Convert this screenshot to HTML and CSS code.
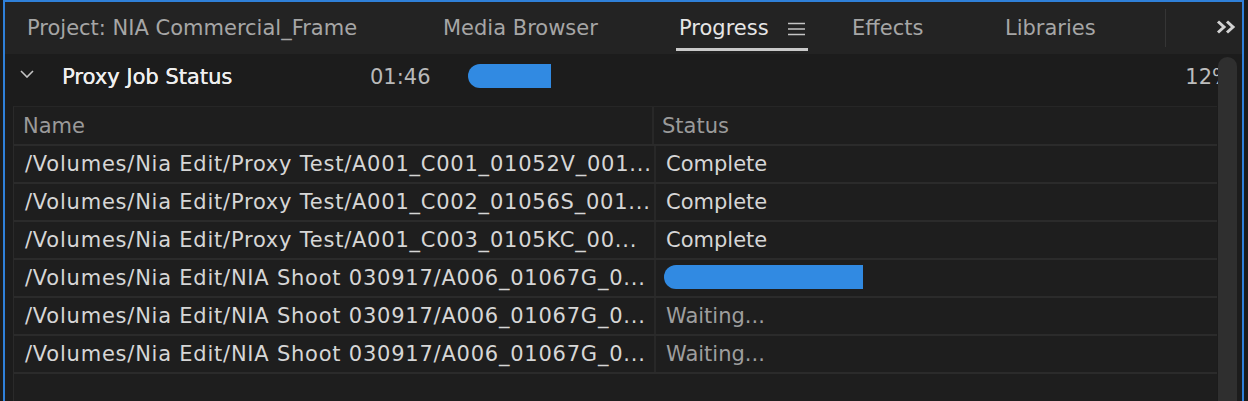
FILE: index.html
```html
<!DOCTYPE html>
<html>
<head>
<meta charset="utf-8">
<link rel="stylesheet" href="styles.css">
</head>
<body>
<div class="frame">
  <div class="tabbar">
    <div class="tab tab-project">Project: NIA Commercial_Frame</div>
    <div class="tab tab-media">Media Browser</div>
    <div class="tab tab-progress">
      <span class="active-tab">Progress
        <svg class="menu-icon" width="17" height="14" viewBox="0 0 17 14"><path d="M0 1.5H17M0 7H17M0 12.5H17" stroke="#c4c4c4" stroke-width="1.6" fill="none"/></svg>
      </span>
    </div>
    <div class="tab tab-effects">Effects</div>
    <div class="tab tab-libraries">Libraries</div>
    <div class="tab-sep"></div>
    <svg class="more-icon" width="20" height="14" viewBox="0 0 20 14"><path d="M2 1.5L8 7L2 12.5M11 1.5L17 7L11 12.5" stroke="#d2d2d2" stroke-width="3" fill="none"/></svg>
  </div>
  <div class="content">
    <div class="job-row">
      <div class="chev-box"><svg width="14" height="8" viewBox="0 0 14 8"><path d="M1 1L7 7L13 1" stroke="#c4c4c4" stroke-width="1.6" fill="none"/></svg></div>
      <div class="job-title">Proxy Job Status</div>
      <div class="job-time">01:46</div>
      <div class="bar bar-job"></div>
      <div class="job-pct">12%</div>
    </div>
    <div class="table">
      <div class="row header">
        <div class="cell name">Name</div>
        <div class="cell status">Status</div>
      </div>
      <div class="row">
        <div class="cell name path">/Volumes/Nia Edit/Proxy Test/A001_C001_01052V_001...</div>
        <div class="cell status">Complete</div>
      </div>
      <div class="row">
        <div class="cell name path">/Volumes/Nia Edit/Proxy Test/A001_C002_01056S_001...</div>
        <div class="cell status">Complete</div>
      </div>
      <div class="row">
        <div class="cell name path">/Volumes/Nia Edit/Proxy Test/A001_C003_0105KC_00...</div>
        <div class="cell status">Complete</div>
      </div>
      <div class="row">
        <div class="cell name path">/Volumes/Nia Edit/NIA Shoot 030917/A006_01067G_0...</div>
        <div class="cell status"><div class="bar bar-row"></div></div>
      </div>
      <div class="row">
        <div class="cell name path">/Volumes/Nia Edit/NIA Shoot 030917/A006_01067G_0...</div>
        <div class="cell status waiting">Waiting...</div>
      </div>
      <div class="row last">
        <div class="cell name path">/Volumes/Nia Edit/NIA Shoot 030917/A006_01067G_0...</div>
        <div class="cell status waiting">Waiting...</div>
      </div>
      <div class="table-fill"></div>
    </div>
    <div class="scroll-thumb"></div>
  </div>
</div>
</body>
</html>
```

FILE: styles.css
```css
html, body {
  margin: 0;
  padding: 0;
  background: #1b1b1b;
  overflow: hidden;
}
body {
  width: 1248px;
  height: 401px;
  font-family: "DejaVu Sans", sans-serif;
  font-size: 21px;
}
.frame {
  box-sizing: border-box;
  margin-left: 3px;
  width: 1241px;
  height: 401px;
  border: 2px solid #2f80d9;
  border-bottom: none;
  display: flex;
  flex-direction: column;
  background: #1c1c1c;
}
.tabbar {
  height: 52px;
  flex: none;
  background: #232323;
  display: flex;
  align-items: center;
  padding-left: 22px;
  color: #a6a6a6;
  white-space: nowrap;
}
.tab { flex: none; }
.tab-project { width: 416px; }
.tab-media { width: 233px; }
.tab-progress { width: 176px; align-self: stretch; display: flex; }
.tab-effects { width: 153px; }
.tab-libraries { width: 160px; }
.active-tab {
  display: flex;
  align-items: center;
  gap: 19px;
  padding: 6px 3px 0 3px;
  margin-bottom: 3px;
  border-bottom: 3px solid #c9c9c9;
  color: #e6e6e6;
}
.menu-icon { margin-top: 1px; }
.tab-sep {
  width: 1px;
  height: 38px;
  background: #353535;
  flex: none;
}
.more-icon {
  margin-left: 50px;
  margin-top: -3px;
  flex: none;
}
.content {
  flex: 1;
  display: flex;
  flex-direction: column;
  position: relative;
  min-height: 0;
}
.job-row {
  height: 46px;
  padding-bottom: 6px;
  flex: none;
  display: flex;
  align-items: center;
  white-space: nowrap;
}
.chev-box {
  width: 42px;
  padding-left: 15px;
  flex: none;
  display: flex;
  align-items: center;
  margin-top: -6px;
}
.job-title {
  width: 308px;
  flex: none;
  color: #efefef;
  text-shadow: 0.3px 0 0 #efefef;
}
.job-time {
  width: 98px;
  flex: none;
  color: #b9b9b9;
}
.bar {
  background: #318ae2;
  height: 24px;
  border-radius: 12px 0 0 12px;
  flex: none;
}
.bar-job { width: 83px; margin-top: -2px; }
.job-pct {
  margin-left: auto;
  padding-right: 10px;
  color: #bdbdbd;
}
.table {
  flex: 1;
  margin-left: 8px;
  width: 1203px;
  display: flex;
  flex-direction: column;
  border-left: 1px solid #2a2a2a;
  border-top: 1px solid #262626;
  background: #1e1e1e;
}
.row {
  height: 36px;
  flex: none;
  display: flex;
  border-top: 2px solid #2b2b2b;
  white-space: nowrap;
  color: #d6d6d6;
}
.row.header {
  border-top: none;
  height: 37px;
  color: #9a9a9a;
}
.row.last { border-bottom: 2px solid #2b2b2b; }
.cell {
  display: flex;
  align-items: center;
  overflow: hidden;
}
.cell.name {
  width: 629px;
  padding-left: 11px;
  border-right: 2px solid #282828;
  flex: none;
}
.cell.path { letter-spacing: 0.77px; }
.row.header .cell.name { padding-left: 9px; }
.cell.status {
  flex: 1;
  padding-left: 10px;
}
.row.header .cell.status { padding-left: 8px; }
.cell.waiting { color: #9e9e9e; }
.bar-row { width: 199px; margin-left: -2px; margin-top: -2px; }
.table-fill { flex: 1; }
.scroll-thumb {
  position: absolute;
  left: 1213px;
  top: 3px;
  width: 19px;
  bottom: 0;
  background: #2f2f2f;
  border-radius: 10px 10px 0 0;
}
```
